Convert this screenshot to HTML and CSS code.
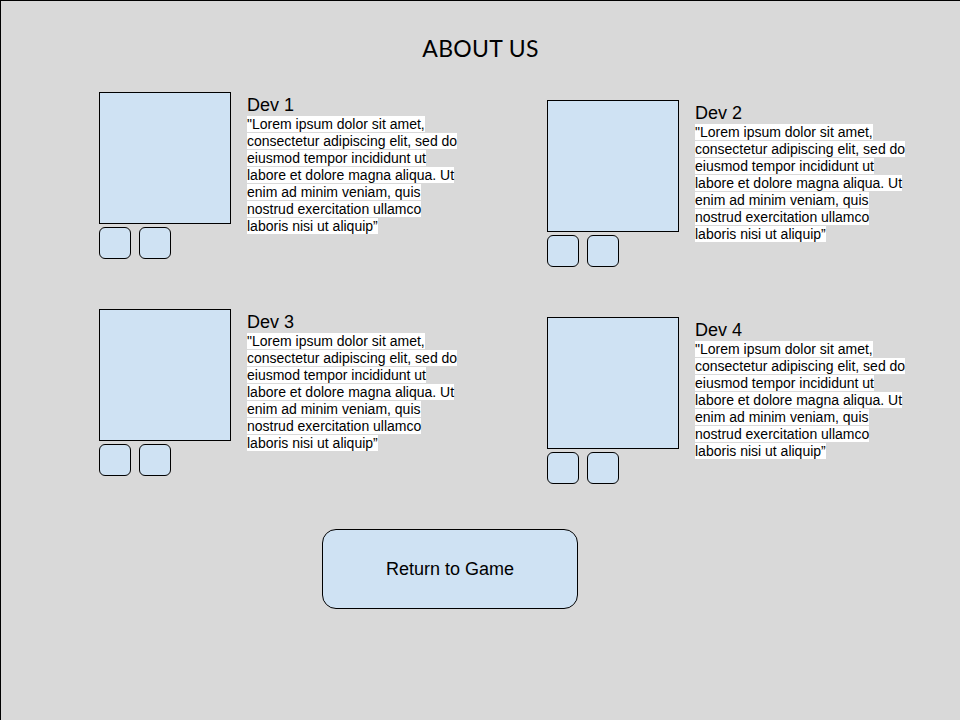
FILE: index.html
```html
<!DOCTYPE html>
<html lang="en">
<head>
    <meta charset="UTF-8">
    <meta name="viewport" content="width=device-width, initial-scale=1.0">
    <title>About Us</title>
    <link rel="stylesheet" href="styles.css">
</head>
<body>
    <div class="page">
        <h1 class="title">ABOUT US</h1>
        <main class="team">
            <section class="dev">
                <div class="dev-media">
                    <div class="photo"></div>
                    <div class="links">
                        <span class="link-btn"></span>
                        <span class="link-btn"></span>
                    </div>
                </div>
                <div class="dev-info">
                    <h2 class="dev-name">Dev 1</h2>
                    <p class="dev-bio"><span>"Lorem ipsum dolor sit amet, consectetur adipiscing elit, sed do eiusmod tempor incididunt ut labore et dolore magna aliqua. Ut enim ad minim veniam, quis nostrud exercitation ullamco laboris nisi ut aliquip”</span></p>
                </div>
            </section>
            <section class="dev dev-right">
                <div class="dev-media">
                    <div class="photo"></div>
                    <div class="links">
                        <span class="link-btn"></span>
                        <span class="link-btn"></span>
                    </div>
                </div>
                <div class="dev-info">
                    <h2 class="dev-name">Dev 2</h2>
                    <p class="dev-bio"><span>"Lorem ipsum dolor sit amet, consectetur adipiscing elit, sed do eiusmod tempor incididunt ut labore et dolore magna aliqua. Ut enim ad minim veniam, quis nostrud exercitation ullamco laboris nisi ut aliquip”</span></p>
                </div>
            </section>
            <section class="dev">
                <div class="dev-media">
                    <div class="photo"></div>
                    <div class="links">
                        <span class="link-btn"></span>
                        <span class="link-btn"></span>
                    </div>
                </div>
                <div class="dev-info">
                    <h2 class="dev-name">Dev 3</h2>
                    <p class="dev-bio"><span>"Lorem ipsum dolor sit amet, consectetur adipiscing elit, sed do eiusmod tempor incididunt ut labore et dolore magna aliqua. Ut enim ad minim veniam, quis nostrud exercitation ullamco laboris nisi ut aliquip”</span></p>
                </div>
            </section>
            <section class="dev dev-right">
                <div class="dev-media">
                    <div class="photo"></div>
                    <div class="links">
                        <span class="link-btn"></span>
                        <span class="link-btn"></span>
                    </div>
                </div>
                <div class="dev-info">
                    <h2 class="dev-name">Dev 4</h2>
                    <p class="dev-bio"><span>"Lorem ipsum dolor sit amet, consectetur adipiscing elit, sed do eiusmod tempor incididunt ut labore et dolore magna aliqua. Ut enim ad minim veniam, quis nostrud exercitation ullamco laboris nisi ut aliquip”</span></p>
                </div>
            </section>
        </main>
        <button class="return-btn">Return to Game</button>
    </div>
</body>
</html>
```

FILE: styles.css
```css
body {
    margin: 0;
    padding: 0;
    background-color: #d9d9d9;
    font-family: 'Liberation Sans', Arial, sans-serif;
    color: #000;
}

.page {
    min-height: 720px;
    box-sizing: border-box;
    border-top: 1px solid #000;
    border-left: 1px solid #000;
    padding-top: 34px;
}

.title {
    margin: 0;
    text-align: center;
    font-family: 'Lato', sans-serif;
    font-weight: 400;
    font-size: 23px;
    line-height: 26px;
    letter-spacing: 0.3px;
}

.team {
    display: grid;
    grid-template-columns: 448px 1fr;
    row-gap: 42px;
    align-items: start;
    margin-top: 31px;
    padding-left: 98px;
}

.dev {
    display: flex;
    align-items: flex-start;
    gap: 16px;
}

.dev-right {
    margin-top: 8px;
}

.photo {
    width: 130px;
    height: 130px;
    background-color: #cfe2f3;
    border: 1px solid #000;
}

.links {
    display: flex;
    gap: 8px;
    margin-top: 3px;
}

.link-btn {
    width: 30px;
    height: 30px;
    background-color: #cfe2f3;
    border: 1px solid #000;
    border-radius: 6px;
}

.dev-info {
    width: 218px;
    padding-top: 3px;
}

.dev-name {
    margin: 0;
    font-size: 18px;
    font-weight: 400;
    line-height: 20px;
}

.dev-bio {
    margin: 1px 0 0;
    font-size: 14px;
    line-height: 17px;
}

.dev-bio span {
    background-color: #fff;
}

.return-btn {
    display: block;
    width: 256px;
    height: 80px;
    margin: 45px 0 0 321px;
    background-color: #cfe2f3;
    border: 1px solid #000;
    border-radius: 14px;
    font-family: 'Liberation Sans', Arial, sans-serif;
    font-size: 18px;
    color: #000;
    cursor: pointer;
}
```
